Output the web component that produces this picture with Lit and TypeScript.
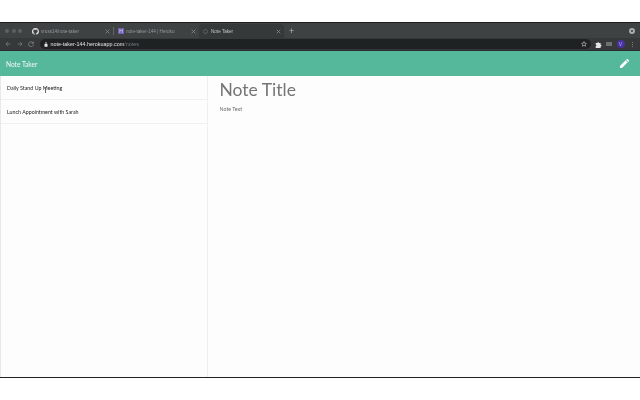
import { LitElement, css, html } from "lit";
import { customElement } from "lit/decorators.js";

const closeIcon = html`<svg class="close" viewBox="0 0 8 8" width="5" height="5">
  <path d="M1 1l6 6M7 1l-6 6" stroke="currentColor" stroke-width="1.300" fill="none" />
</svg>`;

@customElement("browser-chrome")
export class BrowserChrome extends LitElement {
  render() {
    return html`
      <div class="tabstrip">
        <div class="lights"><i></i><i></i><i></i></div>
        <div class="tab first">
          <svg class="fav" viewBox="0 0 16 16" width="7" height="7">
            <path
              fill="#e8e8e8"
              d="M8 0a8 8 0 0 0-2.500 15.600c.4.100.5-.2.500-.4v-1.400c-2.200.5-2.700-1-2.700-1-.4-.9-.9-1.200-.9-1.200-.7-.5.1-.5.1-.5.800.1 1.200.8 1.200.8.700 1.200 1.900.9 2.300.7.100-.5.300-.9.500-1.100-1.800-.2-3.600-.9-3.600-4 0-.9.300-1.600.8-2.100-.1-.2-.4-1 .1-2.100 0 0 .7-.2 2.200.8a7.600 7.600 0 0 1 4 0c1.500-1 2.200-.8 2.200-.8.400 1.100.2 1.900.1 2.100.5.600.8 1.300.8 2.100 0 3.100-1.900 3.700-3.700 3.900.3.300.6.800.6 1.500v2.200c0 .2.100.5.600.4A8 8 0 0 0 8 0z"
            />
          </svg>
          <span class="title">vruss14/note-taker</span>
          ${closeIcon}
        </div>
        <div class="sep"></div>
        <div class="tab second">
          <span class="heroku">H</span>
          <span class="title">note-taker-144 | Heroku</span>
          ${closeIcon}
        </div>
        <div class="tab active">
          <span class="spinner"></span>
          <span class="title">Note Taker</span>
          ${closeIcon}
        </div>
        <span class="plus">+</span>
        <span class="record"></span>
      </div>
      <div class="toolbar">
        <svg class="nav" viewBox="0 0 10 10" width="6" height="6">
          <path d="M9 5H1.500M5 1.500L1.500 5 5 8.500" stroke="#7f8283" stroke-width="1.200" fill="none" />
        </svg>
        <svg class="nav" viewBox="0 0 10 10" width="6" height="6">
          <path d="M1 5h7.500M5 1.500L8.500 5 5 8.500" stroke="#7f8283" stroke-width="1.200" fill="none" />
        </svg>
        <svg class="nav" viewBox="0 0 10 10" width="6" height="6">
          <path d="M8.500 3.500A4 4 0 1 0 9 5.500M8.800 1v2.800H6" stroke="#95989a" stroke-width="1.100" fill="none" />
        </svg>
        <div class="omnibox">
          <svg viewBox="0 0 8 10" width="4" height="5">
            <path fill="#e8e8e8" d="M1 4h.8V2.800a2.200 2.200 0 0 1 4.400 0V4H7v5.500H1zM2.800 4h2.400V2.800a1.200 1.200 0 0 0-2.400 0z" />
          </svg>
          <span class="url">note-taker-144.herokuapp.com<span class="path">/notes</span></span>
          <svg class="star" viewBox="0 0 10 10" width="6" height="6">
            <path d="M5 1l1.200 2.700 2.800.3-2.100 1.900.6 2.900L5 7.400 2.500 8.800l.6-2.900L1 4l2.800-.3z" stroke="#d0d0d0" fill="none" />
          </svg>
        </div>
        <svg class="ext" viewBox="0 0 10 10" width="7" height="7">
          <path fill="#e6e6e6" d="M1 3h2.200a1.300 1.300 0 0 1 2.600 0H8v2.200a1.300 1.300 0 0 1 0 2.600V10H1V7.500a1.300 1.300 0 0 0 0-2.500z" />
        </svg>
        <span class="cast"></span>
        <span class="avatar">V</span>
        <span class="dots"><i></i><i></i><i></i></span>
      </div>
    `;
  }

  static styles = css`
    :host {
      display: block;
      background: #3e4243;
      border-top: 1px solid #1c1c1c;
      font-family: "Liberation Sans", Arial, sans-serif;
      filter: blur(0.4px);
    }
    .tabstrip {
      height: 15px;
      padding-top: 1px;
      box-sizing: border-box;
      display: flex;
      align-items: stretch;
      position: relative;
    }
    .lights {
      width: 32px;
      display: flex;
      align-items: center;
      gap: 2.500px;
      padding-left: 5px;
      box-sizing: border-box;
    }
    .lights i {
      width: 4px;
      height: 4px;
      border-radius: 50%;
      background: #5d6162;
    }
    .tab {
      display: flex;
      align-items: center;
      font-size: 4.600px;
      color: #95989a;
      box-sizing: border-box;
    }
    .title {
      flex: 1;
      white-space: nowrap;
      overflow: hidden;
    }
    .close {
      color: #85888a;
      flex: none;
    }
    .first {
      width: 78px;
      gap: 2px;
    }
    .sep {
      width: 1px;
      height: 8px;
      margin: 3px 4px 0 3px;
      background: #626667;
    }
    .second {
      width: 78px;
      gap: 2px;
    }
    .heroku {
      width: 6px;
      height: 6px;
      background: #6f5fb0;
      color: #e4e0f2;
      font-size: 5px;
      line-height: 6px;
      text-align: center;
      flex: none;
    }
    .active {
      width: 85px;
      margin-left: 3px;
      padding: 0 3.500px 0 4px;
      gap: 3px;
      background: #35393a;
      border-radius: 4px 4px 0 0;
      color: #c2c4c5;
    }
    .spinner {
      width: 3px;
      height: 3px;
      border: 1px solid #5a5e5f;
      border-radius: 50%;
      flex: none;
    }
    .plus {
      margin-left: 5px;
      font-size: 9px;
      line-height: 14px;
      color: #b4b6b7;
    }
    .record {
      position: absolute;
      right: 5px;
      top: 5px;
      width: 2px;
      height: 2px;
      border: 2px solid #a9abac;
      border-radius: 50%;
    }
    .toolbar {
      height: 12px;
      background: #35393a;
      display: flex;
      align-items: center;
      padding: 0 7px 0 5px;
      border-bottom: 1px solid #2a2d2e;
    }
    .nav {
      margin-right: 5.500px;
      flex: none;
    }
    .omnibox {
      flex: 1;
      height: 10px;
      margin-right: 4px;
      padding: 0 4px 0 4px;
      border-radius: 5px;
      background: #1f2223;
      display: flex;
      align-items: center;
      gap: 3px;
    }
    .url {
      flex: 1;
      font-size: 5.400px;
      color: #e3e4e4;
    }
    .path {
      color: #74777a;
    }
    .ext {
      margin-right: 4px;
    }
    .cast {
      width: 6px;
      height: 4px;
      background: #6d7172;
      margin-right: 5px;
    }
    .avatar {
      width: 8px;
      height: 8px;
      border-radius: 50%;
      background: #4a32a0;
      color: #b9aef0;
      font-size: 5px;
      line-height: 8px;
      text-align: center;
      margin-right: 7.500px;
    }
    .dots {
      display: flex;
      flex-direction: column;
      gap: 1px;
    }
    .dots i {
      width: 1px;
      height: 1px;
      background: #7a7d7e;
    }
  `;
}

@customElement("app-root")
export class AppRoot extends LitElement {
  render() {
    return html`
      <browser-chrome></browser-chrome>
      <nav class="navbar">
        <span class="brand">Note Taker</span>
        <svg class="pencil" viewBox="0 0 24 24" width="11" height="11">
          <path
            fill="#fff"
            d="M2 17.500V22h4.500L19 9.500 14.500 5zM21.600 6.900a1.200 1.200 0 0 0 0-1.700l-2.800-2.800a1.200 1.200 0 0 0-1.700 0L15.500 4l4.500 4.500z"
          />
        </svg>
      </nav>
      <main class="content">
        <aside class="list">
          <div class="item">Daily Stand Up Meeting<span class="cursor"></span></div>
          <div class="item">Lunch Appointment with Sarah</div>
        </aside>
        <section class="note">
          <h1>Note Title</h1>
          <p>Note Text</p>
        </section>
      </main>
    `;
  }

  static styles = css`
    :host {
      display: flex;
      flex-direction: column;
      height: 378px;
      padding-top: 22px;
      box-sizing: border-box;
      background: #fff;
      font-family: Lato, "Liberation Sans", sans-serif;
    }
    .navbar {
      flex: none;
      height: 25px;
      background: #55b89b;
      display: flex;
      align-items: center;
      justify-content: space-between;
      padding: 0 10px 0 6px;
    }
    .brand {
      font-size: 6.600px;
      color: #f1f8f5;
      filter: blur(0.25px);
    }
    .content {
      flex: 1;
      min-height: 0;
      display: grid;
      grid-template-columns: 208px 1fr;
      background: #fdfdfd;
      border-bottom: 1px solid #222;
    }
    .list {
      border-left: 1px solid #e8e8e8;
      border-right: 1px solid #efefef;
    }
    .item {
      height: 24px;
      line-height: 24px;
      padding-left: 6px;
      font-size: 5.300px;
      color: #222;
      border-bottom: 1px solid #f0f0f0;
      box-sizing: border-box;
      position: relative;
      filter: blur(0.25px);
    }
    .cursor {
      position: absolute;
      left: 44px;
      top: 11px;
      width: 1px;
      height: 6px;
      background: #666;
    }
    .note {
      padding: 0 11.500px;
      filter: blur(0.25px);
    }
    h1 {
      margin: 2px 0 0;
      font-size: 17.500px;
      line-height: 24px;
      font-weight: 400;
      color: #757575;
    }
    p {
      margin: 3.500px 0 0;
      font-size: 5.300px;
      line-height: 7px;
      color: #6e6e6e;
    }
  `;
}
